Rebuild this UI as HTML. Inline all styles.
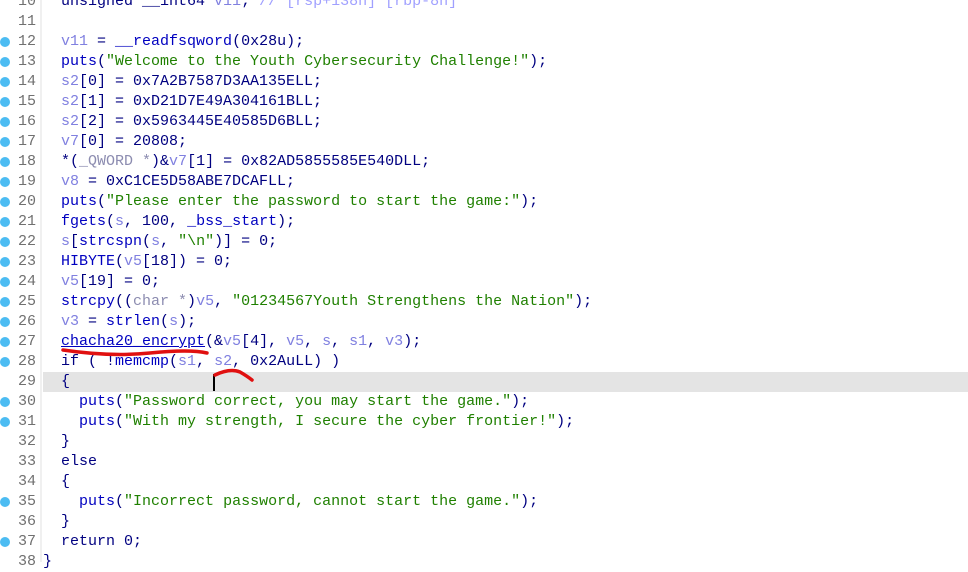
<!DOCTYPE html><html><head><style>
body{margin:0;width:968px;height:562px;background:#fff;overflow:hidden;position:relative;font-family:"Liberation Mono",monospace;font-size:15px}
.g{position:absolute;left:40px;top:0;width:2px;height:562px;background:#f0f0f0}
.hl{position:absolute;left:43px;top:372px;width:925px;height:20px;background:#e4e4e4}
.l{position:absolute;left:0;height:20px;line-height:20px;white-space:pre}
.n{position:absolute;left:0;width:36px;text-align:right;color:#707070}
.d{position:absolute;left:0;top:5px;width:10px;height:10px;border-radius:50%;background:#4cbcf2}
.c{position:absolute;left:61px;color:#000080}
.v{color:#8080e0}.s{color:#1f8000}.k{color:#000080}.f{color:#0000c0}.cm{color:#a0a0ff}.t{color:#8c8cb0}
</style></head><body>
<div class="g"></div><div class="hl"></div>
<div class="l" style="top:-8px"><span class="n">10</span><span class="c">unsigned __int64 <span class="v">v11</span>; <span class="cm">// [rsp+138h] [rbp-8h]</span></span></div>
<div class="l" style="top:12px"><span class="n">11</span></div>
<div class="l" style="top:32px"><span class="d"></span><span class="n">12</span><span class="c"><span class="v">v11</span> = <span class="f">__readfsqword</span>(0x28u);</span></div>
<div class="l" style="top:52px"><span class="d"></span><span class="n">13</span><span class="c"><span class="f">puts</span>(<span class="s">"Welcome to the Youth Cybersecurity Challenge!"</span>);</span></div>
<div class="l" style="top:72px"><span class="d"></span><span class="n">14</span><span class="c"><span class="v">s2</span>[0] = 0x7A2B7587D3AA135ELL;</span></div>
<div class="l" style="top:92px"><span class="d"></span><span class="n">15</span><span class="c"><span class="v">s2</span>[1] = 0xD21D7E49A304161BLL;</span></div>
<div class="l" style="top:112px"><span class="d"></span><span class="n">16</span><span class="c"><span class="v">s2</span>[2] = 0x5963445E40585D6BLL;</span></div>
<div class="l" style="top:132px"><span class="d"></span><span class="n">17</span><span class="c"><span class="v">v7</span>[0] = 20808;</span></div>
<div class="l" style="top:152px"><span class="d"></span><span class="n">18</span><span class="c">*(<span class="t">_QWORD *</span>)&amp;<span class="v">v7</span>[1] = 0x82AD5855585E540DLL;</span></div>
<div class="l" style="top:172px"><span class="d"></span><span class="n">19</span><span class="c"><span class="v">v8</span> = 0xC1CE5D58ABE7DCAFLL;</span></div>
<div class="l" style="top:192px"><span class="d"></span><span class="n">20</span><span class="c"><span class="f">puts</span>(<span class="s">"Please enter the password to start the game:"</span>);</span></div>
<div class="l" style="top:212px"><span class="d"></span><span class="n">21</span><span class="c"><span class="f">fgets</span>(<span class="v">s</span>, 100, <span class="f">_bss_start</span>);</span></div>
<div class="l" style="top:232px"><span class="d"></span><span class="n">22</span><span class="c"><span class="v">s</span>[<span class="f">strcspn</span>(<span class="v">s</span>, <span class="s">"\n"</span>)] = 0;</span></div>
<div class="l" style="top:252px"><span class="d"></span><span class="n">23</span><span class="c"><span class="f">HIBYTE</span>(<span class="v">v5</span>[18]) = 0;</span></div>
<div class="l" style="top:272px"><span class="d"></span><span class="n">24</span><span class="c"><span class="v">v5</span>[19] = 0;</span></div>
<div class="l" style="top:292px"><span class="d"></span><span class="n">25</span><span class="c"><span class="f">strcpy</span>((<span class="t">char *</span>)<span class="v">v5</span>, <span class="s">"01234567Youth Strengthens the Nation"</span>);</span></div>
<div class="l" style="top:312px"><span class="d"></span><span class="n">26</span><span class="c"><span class="v">v3</span> = <span class="f">strlen</span>(<span class="v">s</span>);</span></div>
<div class="l" style="top:332px"><span class="d"></span><span class="n">27</span><span class="c"><span class="f" style="text-decoration:underline">chacha20_encrypt</span>(&amp;<span class="v">v5</span>[4], <span class="v">v5</span>, <span class="v">s</span>, <span class="v">s1</span>, <span class="v">v3</span>);</span></div>
<div class="l" style="top:352px"><span class="d"></span><span class="n">28</span><span class="c">if ( !<span class="f">memcmp</span>(<span class="v">s1</span>, <span class="v">s2</span>, 0x2AuLL) )</span></div>
<div class="l" style="top:372px"><span class="n">29</span><span class="c">{</span></div>
<div class="l" style="top:392px"><span class="d"></span><span class="n">30</span><span class="c">  <span class="f">puts</span>(<span class="s">"Password correct, you may start the game."</span>);</span></div>
<div class="l" style="top:412px"><span class="d"></span><span class="n">31</span><span class="c">  <span class="f">puts</span>(<span class="s">"With my strength, I secure the cyber frontier!"</span>);</span></div>
<div class="l" style="top:432px"><span class="n">32</span><span class="c">}</span></div>
<div class="l" style="top:452px"><span class="n">33</span><span class="c">else</span></div>
<div class="l" style="top:472px"><span class="n">34</span><span class="c">{</span></div>
<div class="l" style="top:492px"><span class="d"></span><span class="n">35</span><span class="c">  <span class="f">puts</span>(<span class="s">"Incorrect password, cannot start the game."</span>);</span></div>
<div class="l" style="top:512px"><span class="n">36</span><span class="c">}</span></div>
<div class="l" style="top:532px"><span class="d"></span><span class="n">37</span><span class="c">return 0;</span></div>
<div class="l" style="top:552px"><span class="n">38</span><span class="c" style="left:43px">}</span></div>
<div style="position:absolute;left:213px;top:374px;width:2px;height:17px;background:#000"></div>
<svg width="968" height="562" style="position:absolute;left:0;top:0">
<path d="M63 350 Q110 357 150 353 Q190 349 207 353" stroke="#e01010" stroke-width="3.5" fill="none" stroke-linecap="round"/>
<path d="M215 375 Q230 368 240 372 Q247 376 252 380" stroke="#e01010" stroke-width="3.5" fill="none" stroke-linecap="round"/>
</svg>
</body></html>
